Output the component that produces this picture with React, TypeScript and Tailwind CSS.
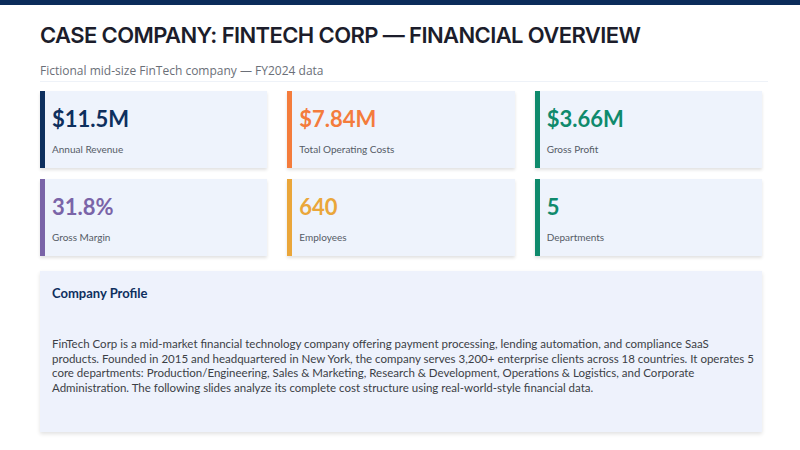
const stats = [
  { value: '$11.5M', label: 'Annual Revenue', bar: 'border-[#0d2f5e]', text: 'text-[#0d2f5e]' },
  { value: '$7.84M', label: 'Total Operating Costs', bar: 'border-[#f47c3c]', text: 'text-[#f47c3c]' },
  { value: '$3.66M', label: 'Gross Profit', bar: 'border-[#0f8a6c]', text: 'text-[#0f8a6c]' },
  { value: '31.8%', label: 'Gross Margin', bar: 'border-[#7a64a8]', text: 'text-[#7a64a8]' },
  { value: '640', label: 'Employees', bar: 'border-[#eaa63a]', text: 'text-[#eaa63a]' },
  { value: '5', label: 'Departments', bar: 'border-[#0f8a6c]', text: 'text-[#0f8a6c]' },
];

function StatCard({ value, label, bar, text }: (typeof stats)[number]) {
  return (
    <div className={`h-[77px] bg-[#eef3fc] border-l-[5px] ${bar} pl-[7px] pt-[14px] shadow-[0_2px_3px_rgba(0,0,0,0.12)]`}>
      <div className={`text-[22px] font-bold leading-[28px] ${text}`}>{value}</div>
      <div className="mt-[9px] text-[10px] leading-[14px] text-[#555b66]">{label}</div>
    </div>
  );
}

export default function App() {
  return (
    <div className="w-[800px] h-[450px] bg-white overflow-hidden" style={{ fontFamily: 'Lato, "Open Sans", sans-serif' }}>
      <div className="h-[5px] bg-[#0b2c5a]" />
      <div className="px-10">
        <h1
          className="mt-[15px] text-[22px] leading-[30px] font-semibold tracking-[-0.6px] text-[#1c1d2b]"
          style={{ fontFamily: 'Inter, sans-serif' }}
        >
          CASE COMPANY: FINTECH CORP — FINANCIAL OVERVIEW
        </h1>
        <p className="mt-[13px] text-[12px] leading-[16px] text-[#6b6f78]" style={{ fontFamily: '"Open Sans", sans-serif' }}>
          Fictional mid-size FinTech company — FY2024 data
        </p>
        <div className="mt-[2px] w-[728px] h-px bg-[#eef2f8]" />
        <div className="mt-[9px] w-[722px] grid grid-cols-3 gap-x-5 gap-y-[11px]">
          {stats.map((s) => (
            <StatCard key={s.label} {...s} />
          ))}
        </div>
        <div className="mt-[15px] w-[722px] h-[161px] bg-[#eef2fc] px-3 pt-[13px] shadow-[0_2px_4px_rgba(0,0,0,0.12)]">
          <h2 className="text-[13px] leading-[18px] font-bold text-[#0d2f5e]">Company Profile</h2>
          <p className="mt-[35px] text-[11.5px] leading-[14.7px] text-[#3c3f46] whitespace-nowrap">
            FinTech Corp is a mid-market financial technology company offering payment processing, lending automation, and
            compliance SaaS
            <br />
            products. Founded in 2015 and headquartered in New York, the company serves 3,200+ enterprise clients across 18
            countries. It operates 5
            <br />
            core departments: Production/Engineering, Sales &amp; Marketing, Research &amp; Development, Operations &amp;
            Logistics, and Corporate
            <br />
            Administration. The following slides analyze its complete cost structure using real-world-style financial data.
          </p>
        </div>
      </div>
    </div>
  );
}
